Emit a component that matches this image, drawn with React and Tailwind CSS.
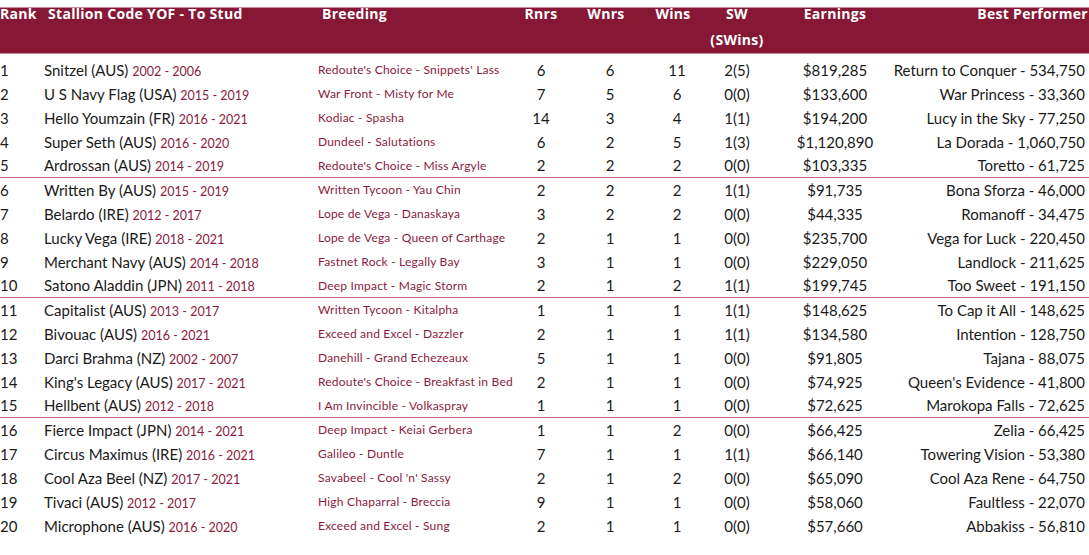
const rows = [
  ["1", "Snitzel (AUS)", "2002 - 2006", "Redoute's Choice - Snippets' Lass", "6", "6", "11", "2(5)", "$819,285", "Return to Conquer - 534,750"],
  ["2", "U S Navy Flag (USA)", "2015 - 2019", "War Front - Misty for Me", "7", "5", "6", "0(0)", "$133,600", "War Princess - 33,360"],
  ["3", "Hello Youmzain (FR)", "2016 - 2021", "Kodiac - Spasha", "14", "3", "4", "1(1)", "$194,200", "Lucy in the Sky - 77,250"],
  ["4", "Super Seth (AUS)", "2016 - 2020", "Dundeel - Salutations", "6", "2", "5", "1(3)", "$1,120,890", "La Dorada - 1,060,750"],
  ["5", "Ardrossan (AUS)", "2014 - 2019", "Redoute's Choice - Miss Argyle", "2", "2", "2", "0(0)", "$103,335", "Toretto - 61,725"],
  ["6", "Written By (AUS)", "2015 - 2019", "Written Tycoon - Yau Chin", "2", "2", "2", "1(1)", "$91,735", "Bona Sforza - 46,000"],
  ["7", "Belardo (IRE)", "2012 - 2017", "Lope de Vega - Danaskaya", "3", "2", "2", "0(0)", "$44,335", "Romanoff - 34,475"],
  ["8", "Lucky Vega (IRE)", "2018 - 2021", "Lope de Vega - Queen of Carthage", "2", "1", "1", "0(0)", "$235,700", "Vega for Luck - 220,450"],
  ["9", "Merchant Navy (AUS)", "2014 - 2018", "Fastnet Rock - Legally Bay", "3", "1", "1", "0(0)", "$229,050", "Landlock - 211,625"],
  ["10", "Satono Aladdin (JPN)", "2011 - 2018", "Deep Impact - Magic Storm", "2", "1", "2", "1(1)", "$199,745", "Too Sweet - 191,150"],
  ["11", "Capitalist (AUS)", "2013 - 2017", "Written Tycoon - Kitalpha", "1", "1", "1", "1(1)", "$148,625", "To Cap it All - 148,625"],
  ["12", "Bivouac (AUS)", "2016 - 2021", "Exceed and Excel - Dazzler", "2", "1", "1", "1(1)", "$134,580", "Intention - 128,750"],
  ["13", "Darci Brahma (NZ)", "2002 - 2007", "Danehill - Grand Echezeaux", "5", "1", "1", "0(0)", "$91,805", "Tajana - 88,075"],
  ["14", "King's Legacy (AUS)", "2017 - 2021", "Redoute's Choice - Breakfast in Bed", "2", "1", "1", "0(0)", "$74,925", "Queen's Evidence - 41,800"],
  ["15", "Hellbent (AUS)", "2012 - 2018", "I Am Invincible - Volkaspray", "1", "1", "1", "0(0)", "$72,625", "Marokopa Falls - 72,625"],
  ["16", "Fierce Impact (JPN)", "2014 - 2021", "Deep Impact - Keiai Gerbera", "1", "1", "2", "0(0)", "$66,425", "Zelia - 66,425"],
  ["17", "Circus Maximus (IRE)", "2016 - 2021", "Galileo - Duntle", "7", "1", "1", "1(1)", "$66,140", "Towering Vision - 53,380"],
  ["18", "Cool Aza Beel (NZ)", "2017 - 2021", "Savabeel - Cool 'n' Sassy", "2", "1", "2", "0(0)", "$65,090", "Cool Aza Rene - 64,750"],
  ["19", "Tivaci (AUS)", "2012 - 2017", "High Chaparral - Breccia", "9", "1", "1", "0(0)", "$58,060", "Faultless - 22,070"],
  ["20", "Microphone (AUS)", "2016 - 2020", "Exceed and Excel - Sung", "2", "1", "1", "0(0)", "$57,660", "Abbakiss - 56,810"],
];

const font = { fontFamily: "Lato, 'Noto Sans', sans-serif" };
const headFont = { fontFamily: "'Open Sans', Lato, sans-serif" };

export default function App() {
  return (
    <div className="w-[1089px] h-[555px] bg-white text-[#1a1a1a] overflow-hidden pt-[7px]" style={font}>
      {/* header */}
      <div className="h-[47px] bg-[#861836] border-t border-b border-[#c98a9c]">
        <div className="flex text-white font-bold text-[14px] leading-[12px] tracking-[0.3px] whitespace-nowrap" style={headFont}>
          <div className="w-[44px]">Rank</div>
          <div className="w-[274px] pl-[4px]">Stallion Code YOF - To Stud</div>
          <div className="w-[193px] pl-[4px]">Breeding</div>
          <div className="w-[60px] text-center">Rnrs</div>
          <div className="w-[74px] text-center pr-[4px]">Wnrs</div>
          <div className="w-[64px] text-center pr-[8px]">Wins</div>
          <div className="w-[56px] flex flex-col items-center">
            <span>SW</span>
            <span className="mt-[14px]">(SWins)</span>
          </div>
          <div className="w-[120px] pl-[20px] text-center">Earnings</div>
          <div className="w-[203px] text-right">Best Performer</div>
        </div>
      </div>

      {/* body */}
      <div className="pt-[4px]">
        {rows.map((r, i) => (
          <div
            key={r[0]}
            className={`flex items-center h-[24px] whitespace-nowrap ${
              i === 4 || i === 9 || i === 14 ? "border-b border-[#c8647f]" : ""
            }`}
          >
            <div className="w-[44px] text-[15px]">{r[0]}</div>
            <div className="w-[274px] text-[15px]">
              {r[1]} <span className="text-[12.5px] text-[#8b1a3e]">{r[2]}</span>
            </div>
            <div className="w-[193px] text-[12px] text-[#8b1a3e] tracking-[0.2px]">{r[3]}</div>
            <div className="w-[60px] text-center text-[15px]">{r[4]}</div>
            <div className="w-[74px] text-center text-[15px] pl-[4px]">{r[5]}</div>
            <div className="w-[64px] text-center text-[15px]">{r[6]}</div>
            <div className="w-[56px] text-center text-[15px]">{r[7]}</div>
            <div className="w-[120px] pl-[20px] text-center text-[15px]">{r[8]}</div>
            <div className="w-[200px] flex justify-end text-[15px]">
              <span>{r[9]}</span>
            </div>
          </div>
        ))}
      </div>
    </div>
  );
}
